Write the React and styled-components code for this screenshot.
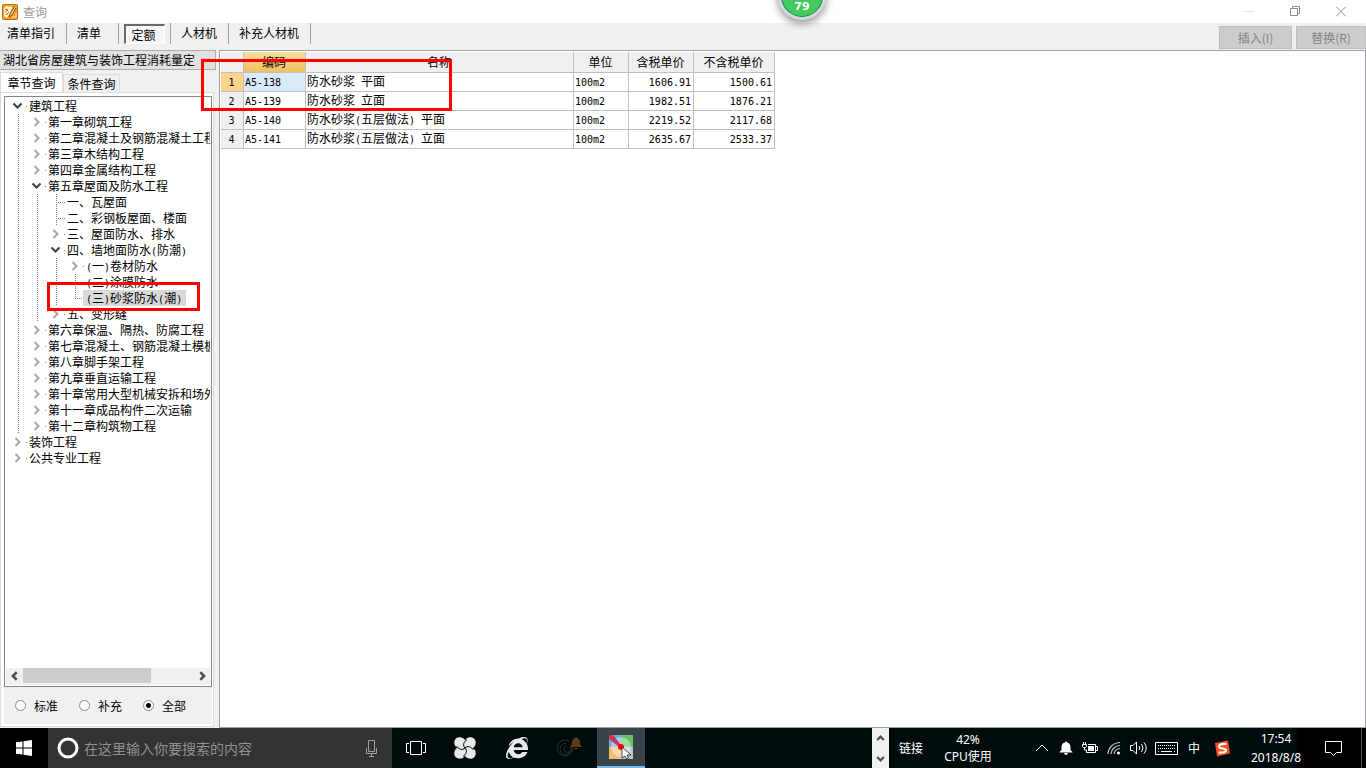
import { Fragment, useState } from 'react';
import styled, { createGlobalStyle, css } from 'styled-components';
import { FaInternetExplorer } from 'react-icons/fa';

const GlobalStyle = createGlobalStyle`
  * {
    box-sizing: border-box;
  }
  body {
    margin: 0;
    overflow: hidden;
    font-family: "Noto Sans CJK SC", sans-serif;
    font-size: 12px;
    line-height: 16px;
    color: #000;
  }
  button, input, select {
    margin: 0;
    padding: 0;
    font: inherit;
    color: inherit;
  }
  button {
    border: 0;
    background: none;
  }
`;

const Desktop = styled.div`
  position: relative;
  display: flex;
  flex-direction: column;
  height: 100vh;
  background-color: #f0f0f0;
`;

/* ---------- title bar ---------- */
const TitleBar = styled.header`
  display: flex;
  align-items: center;
  height: 23px;
  padding: 0 2px;
  background-color: white;
  color: #999;
  .title {
    flex: 1;
    margin-left: 5px;
  }
`;
const WindowButton = styled.button`
  width: 46px;
  height: 20px;
  display: flex;
  align-items: center;
  justify-content: center;
`;

/* ---------- toolbar ---------- */
const Toolbar = styled.nav`
  display: flex;
  align-items: flex-start;
  height: 27px;
`;
const ToolItem = styled.div`
  display: flex;
  height: 21px;
  min-width: 52px;
  padding: ${(props) => (props.$pressed ? '1px 5px 0' : '0 11px 0 10px')};
  border-right: 1px solid #a0a0a0;
  &:first-child {
    padding-left: 7px;
  }
`;
const ToolButton = styled.button`
  height: 19px;
  white-space: nowrap;
  ${(props) =>
    props.$pressed &&
    css`
      width: 41px;
      height: 20px;
      padding-right: 3px;
      border: 1px solid #fff;
      border-top: 2px solid #696969;
      border-left: 2px solid #696969;
      background-color: #f7f7f7;
    `}
`;
const Actions = styled.div`
  display: flex;
  gap: 4px;
  margin-left: auto;
  padding-top: 3px;
`;
const ActionButton = styled.button`
  width: ${(props) => props.$width}px;
  height: 23px;
  border: 1px solid #bfbfbf;
  background-color: #ccc;
  color: #838383;
`;

/* ---------- sidebar ---------- */
const Main = styled.main`
  flex: 1;
  display: flex;
  min-height: 0;
`;
const Sidebar = styled.aside`
  display: flex;
  flex-direction: column;
  width: 219px;
  padding-right: 3px;
`;
const LibrarySelect = styled.div`
  display: grid;
  align-items: center;
  height: 20px;
  margin-bottom: 2px;
  border: 1px solid #adadad;
  border-left: 0;
  background-color: #e1e1e1;
  select {
    grid-area: 1 / 1;
    width: 100%;
    height: 18px;
    padding-left: 3px;
    border: 0;
    background: none;
    appearance: none;
  }
  svg {
    grid-area: 1 / 1;
    justify-self: end;
    margin-right: 5px;
    pointer-events: none;
  }
`;
const Tabs = styled.div`
  display: flex;
  align-items: flex-end;
  height: 20px;
`;
const Tab = styled.button`
  width: ${(props) => (props.$active ? 63 : 57)}px;
  height: ${(props) => (props.$active ? 20 : 18)}px;
  border: 1px solid #dcdcdc;
  border-bottom: 0;
  background-color: ${(props) => (props.$active ? 'white' : '#f0f0f0')};
`;
const TabPanel = styled.div`
  flex: 1;
  display: flex;
  flex-direction: column;
  min-height: 0;
  margin: 0 2px 1px 0;
  padding: 3px 1px 2px 3px;
  border: 1px solid #dcdcdc;
  background-color: white;
`;
const TreeBox = styled.div`
  flex: 1;
  display: flex;
  flex-direction: column;
  justify-content: space-between;
  min-height: 0;
  padding: 1px;
  border: 1px solid #828790;
`;
const TreeList = styled.ul`
  margin: 0;
  padding: 0;
  list-style: none;
  overflow: hidden;
`;
const TreeRow = styled.div`
  display: flex;
  height: 16px;
  padding-left: 3px;
  white-space: nowrap;
`;
const Guide = styled.span`
  flex: none;
  width: 19px;
  height: ${(props) => (props.$half ? 9 : 16)}px;
  background: repeating-linear-gradient(#808080 0 1px, transparent 1px 2px) 9px 0 / 1px 100% no-repeat;
  ${(props) =>
    props.$leaf &&
    css`
      background:
        repeating-linear-gradient(#808080 0 1px, transparent 1px 2px) 9px 0 / 1px 100% no-repeat,
        repeating-linear-gradient(90deg, #808080 0 1px, transparent 1px 2px) 9px 8px / 10px 1px no-repeat;
    `}
`;
const Expander = styled.button`
  flex: none;
  width: 19px;
  height: 16px;
  svg {
    display: block;
  }
`;
const NodeLabel = styled.span`
  margin-left: -2px;
  padding: 0 4px 0 3px;
  background-color: ${(props) => (props.$selected ? '#d9d9d9' : 'transparent')};
`;
const ScrollBar = styled.div`
  flex: none;
  display: flex;
  height: 17px;
  padding-bottom: 1px;
  background-color: #f0f0f0;
  button {
    width: 17px;
    display: flex;
    align-items: center;
    justify-content: center;
  }
  .track {
    flex: 1;
  }
  .thumb {
    width: 75%;
    height: 15px;
    background-color: #cdcdcd;
  }
`;
const Filters = styled.div`
  display: flex;
  height: 37px;
  padding-left: 11px;
  background-color: #f0f0f0;
  label {
    display: flex;
    align-items: center;
    gap: 8px;
    width: 64px;
  }
  input {
    appearance: none;
    width: 11px;
    height: 11px;
    border: 1px solid #8a8a8a;
    border-radius: 50%;
    background-color: white;
  }
  input:checked {
    background-image: radial-gradient(circle, #000 2px, transparent 3px);
  }
`;

/* ---------- table ---------- */
const Content = styled.section`
  flex: 1;
  min-width: 0;
  padding: 1px;
  border: 1px solid #a0a0a8;
  background-color: white;
`;
const QuotaTable = styled.table`
  width: 554px;
  table-layout: fixed;
  border-collapse: separate;
  border-spacing: 0;
  th,
  td {
    height: 19px;
    padding: 0 2px 0 1px;
    border-right: 1px solid #c0c0c0;
    border-bottom: 1px solid #c0c0c0;
    font-weight: normal;
    line-height: 16px;
    text-align: left;
    white-space: nowrap;
  }
  th {
    background-color: #f0f0f0;
    text-align: center;
  }
  thead th {
    height: 21px;
  }
  .active-col {
    background: linear-gradient(#fadb9f, #f0c060);
  }
  .active-row {
    background-color: #ffd58d;
  }
  .active-cell {
    background-color: #d9eaf9;
  }
  .number {
    text-align: right;
  }
`;
const Half = styled.span`
  font-family: "DejaVu Sans Mono", monospace;
  font-size: 10px;
`;

/* ---------- overlays ---------- */
const Mark = styled.div`
  position: absolute;
  top: ${(props) => props.$top}px;
  left: ${(props) => props.$left}px;
  width: ${(props) => props.$width}px;
  height: ${(props) => props.$height}px;
  border: 3px solid #f00;
  pointer-events: none;
`;
const Ball = styled.div`
  position: absolute;
  top: -28px;
  left: calc(50% + 95px);
  width: 48px;
  height: 48px;
  padding-top: 24px;
  border: 3px solid #d4d8d6;
  border-radius: 50%;
  background-color: #42c95f;
  box-shadow: inset 0 0 0 1px #12824d, 0 3px 8px rgba(0, 0, 0, 0.45);
  color: white;
  font: bold 11px/16px "DejaVu Sans", sans-serif;
  text-align: center;
`;

/* ---------- taskbar ---------- */
const Taskbar = styled.footer`
  display: flex;
  height: 40px;
  background: linear-gradient(to left, #000 69px, #000b0e 69px);
  color: white;
`;
const TaskButton = styled.button`
  flex: none;
  display: flex;
  align-items: center;
  justify-content: center;
  width: ${(props) => props.$width || 48}px;
  height: 40px;
  ${(props) =>
    props.$active &&
    css`
      border-bottom: 2px solid #76b9ed;
      background-color: #384449;
    `}
`;
const StartButton = styled(TaskButton)`
  background-color: #000;
`;
const Search = styled.div`
  display: flex;
  align-items: center;
  width: 344px;
  padding: 0 14px 0 9px;
  background-color: #333;
  input {
    flex: 1;
    min-width: 0;
    margin: 0 5px;
    border: 0;
    outline: 0;
    background: none;
    font-size: 14px;
    line-height: 20px;
  }
  input::placeholder {
    color: #919191;
    opacity: 1;
  }
`;
const Apps = styled.div`
  display: flex;
  gap: 4px;
  margin-left: 1px;
`;
const Spinner = styled.div`
  display: flex;
  flex-direction: column;
  width: 17px;
  margin-left: auto;
  background-color: #f0f0f0;
  button {
    flex: 1;
    display: flex;
    align-items: center;
    justify-content: center;
  }
`;
const Info = styled.div`
  display: flex;
  flex-direction: column;
  justify-content: center;
  width: ${(props) => props.$width}px;
  font-family: "Noto Sans", "Noto Sans CJK SC", sans-serif;
  line-height: ${(props) => props.$line || 17}px;
  text-align: center;
  white-space: nowrap;
`;
const Tray = styled.div`
  display: flex;
  margin-left: 27px;
`;
const ShowDesktop = styled.button`
  width: 5px;
  margin-left: 9px;
  border-left: 1px solid #555;
`;

const tree = [
  {
    name: '建筑工程',
    children: [
      { name: '第一章砌筑工程', children: [] },
      { name: '第二章混凝土及钢筋混凝土工程', children: [] },
      { name: '第三章木结构工程', children: [] },
      { name: '第四章金属结构工程', children: [] },
      {
        name: '第五章屋面及防水工程',
        children: [
          { name: '一、瓦屋面' },
          { name: '二、彩钢板屋面、楼面' },
          { name: '三、屋面防水、排水', children: [] },
          {
            name: '四、墙地面防水(防潮)',
            children: [
              { name: '(一)卷材防水', children: [] },
              { name: '(二)涂膜防水' },
              { name: '(三)砂浆防水(潮)' },
            ],
          },
          { name: '五、变形缝', children: [] },
        ],
      },
      { name: '第六章保温、隔热、防腐工程', children: [] },
      { name: '第七章混凝土、钢筋混凝土模板', children: [] },
      { name: '第八章脚手架工程', children: [] },
      { name: '第九章垂直运输工程', children: [] },
      { name: '第十章常用大型机械安拆和场外', children: [] },
      { name: '第十一章成品构件二次运输', children: [] },
      { name: '第十二章构筑物工程', children: [] },
    ],
  },
  { name: '装饰工程', children: [] },
  { name: '公共专业工程', children: [] },
];

const quotas = [
  ['A5-138', '防水砂浆 平面', '100m2', '1606.91', '1500.61'],
  ['A5-139', '防水砂浆 立面', '100m2', '1982.51', '1876.21'],
  ['A5-140', '防水砂浆(五层做法) 平面', '100m2', '2219.52', '2117.68'],
  ['A5-141', '防水砂浆(五层做法) 立面', '100m2', '2635.67', '2533.37'],
];

// half-width characters take half of a full-width one
function Text({ children }) {
  return children
    .split(/([\x20-\x7e]+)/)
    .map((part, i) => (i % 2 ? <Half key={i}>{part}</Half> : <Fragment key={i}>{part}</Fragment>));
}

function Chevron({ d, width = 12, height = 12, color = '#505050', stroke = 2 }) {
  return (
    <svg width={width} height={height} viewBox="0 0 12 12" fill="none" stroke={color} strokeWidth={stroke}>
      <path d={d} />
    </svg>
  );
}

function TreeNode({ node, depth, last, selected, onSelect }) {
  const [open, setOpen] = useState(Boolean(node.children?.length));

  return (
    <li>
      <TreeRow onClick={() => onSelect(node.name)}>
        {Array.from({ length: depth }, (_, i) => (
          <Guide key={i} />
        ))}
        {node.children ? (
          <Expander aria-label={node.name} onClick={() => setOpen(!open)}>
            <svg width="19" height="16" fill="none" strokeWidth="2">
              {open ? (
                <path d="M4.5 5.5 8.5 9.5 12.5 5.5" stroke="#404040" />
              ) : (
                <path d="M6.5 4 10.5 8 6.5 12" stroke="#a6a6a6" />
              )}
              <path d="M17 8h1v1h-1z" fill="#808080" />
            </svg>
          </Expander>
        ) : (
          <Guide $leaf $half={last} />
        )}
        <NodeLabel $selected={selected === node.name}>
          <Text>{node.name}</Text>
        </NodeLabel>
      </TreeRow>
      {open && (
        <TreeList>
          {node.children.map((child, i) => (
            <TreeNode
              key={child.name}
              node={child}
              depth={depth + 1}
              last={i === node.children.length - 1}
              selected={selected}
              onSelect={onSelect}
            />
          ))}
        </TreeList>
      )}
    </li>
  );
}

function TopBar() {
  return (
    <>
      <TitleBar>
        <svg width="16" height="16" viewBox="0 0 16 16">
          <rect x="0.5" y="0.5" width="15" height="15" rx="1" fill="#f2a21b" stroke="#b96a12" />
          <path d="M2 4l3-2 2 1 2-1 1 2-2 5-3 5-3-2z" fill="#fff3cf" />
          <path d="M3 5l3 1M3 8l3-2M4 11l3-3" stroke="#b5651d" />
          <path d="M13 2l-5 8-1 3 3-2 4-7" fill="#fbe08a" stroke="#8a4a10" />
          <path d="M10 13h4V9" stroke="#ffe9a6" fill="none" />
        </svg>
        <span className="title">查询</span>
        <WindowButton aria-label="最小化">
          <svg width="10" height="11" stroke="#e5e5e5"><path d="M0 5.5h10" /></svg>
        </WindowButton>
        <WindowButton aria-label="还原">
          <svg width="10" height="11" fill="none" stroke="#8c8c8c">
            <path d="M.5 2.5h7v7h-7zM2.500 2.500V.5h7v7h-2" />
          </svg>
        </WindowButton>
        <WindowButton aria-label="关闭">
          <svg width="10" height="11" stroke="#8c8c8c"><path d="M0 .5l10 10M10 .5l-10 10" /></svg>
        </WindowButton>
      </TitleBar>
      <Toolbar>
        {['清单指引', '清单', '定额', '人材机', '补充人材机'].map((name) => (
          <ToolItem key={name} $pressed={name === '定额'}>
            <ToolButton $pressed={name === '定额'}>{name}</ToolButton>
          </ToolItem>
        ))}
        <Actions>
          <ActionButton $width={73} disabled>插入(I)</ActionButton>
          <ActionButton $width={70} disabled>替换(R)</ActionButton>
        </Actions>
      </Toolbar>
    </>
  );
}

function SidePanel() {
  const [selected, setSelected] = useState('(三)砂浆防水(潮)');
  const [filter, setFilter] = useState('全部');

  return (
    <Sidebar>
      <LibrarySelect>
        <select aria-label="定额库">
          <option>湖北省房屋建筑与装饰工程消耗量定</option>
        </select>
        <Chevron d="M2 4 6 8 10 4" width={8} height={8} color="#a0a0a0" />
      </LibrarySelect>
      <Tabs>
        <Tab $active>章节查询</Tab>
        <Tab>条件查询</Tab>
      </Tabs>
      <TabPanel>
        <TreeBox>
          <TreeList>
            {tree.map((node) => (
              <TreeNode key={node.name} node={node} depth={0} selected={selected} onSelect={setSelected} />
            ))}
          </TreeList>
          <ScrollBar>
            <button aria-label="向左"><Chevron d="M8 1.500 3.500 6 8 10.500" width={10} height={10} stroke={3} /></button>
            <div className="track"><div className="thumb" /></div>
            <button aria-label="向右"><Chevron d="M4 1.500 8.500 6 4 10.500" width={10} height={10} stroke={3} /></button>
          </ScrollBar>
        </TreeBox>
        <Filters>
          {['标准', '补充', '全部'].map((name) => (
            <label key={name}>
              <input type="radio" name="filter" checked={filter === name} onChange={() => setFilter(name)} />
              {name}
            </label>
          ))}
        </Filters>
      </TabPanel>
    </Sidebar>
  );
}

function QuotaList() {
  return (
    <Content>
      <QuotaTable>
        <colgroup>
          {[23, 62, 268, 55, 65, 81].map((width) => (
            <col key={width} width={width} />
          ))}
        </colgroup>
        <thead>
          <tr>
            <th />
            <th className="active-col">编码</th>
            <th>名称</th>
            <th>单位</th>
            <th>含税单价</th>
            <th>不含税单价</th>
          </tr>
        </thead>
        <tbody>
          {quotas.map((row, i) => (
            <tr key={row[0]}>
              <th className={i === 0 ? 'active-row' : ''}><Text>{String(i + 1)}</Text></th>
              <td className={i === 0 ? 'active-cell' : ''}><Text>{row[0]}</Text></td>
              <td><Text>{row[1]}</Text></td>
              <td><Text>{row[2]}</Text></td>
              <td className="number"><Text>{row[3]}</Text></td>
              <td className="number"><Text>{row[4]}</Text></td>
            </tr>
          ))}
        </tbody>
      </QuotaTable>
    </Content>
  );
}

function BottomBar() {
  return (
    <Taskbar>
      <StartButton aria-label="开始">
        <svg width="16" height="16" viewBox="0 0 16 16" fill="white">
          <path d="M0 2.300 6.500 1.400V7.500H0zM7.500 1.200 16 0V7.500H7.500zM0 8.500H6.500V14.600L0 13.700zM7.500 8.500H16V16L7.500 14.800z" />
        </svg>
      </StartButton>
      <Search>
        <svg width="22" height="22" fill="none" stroke="white" strokeWidth="3"><circle cx="11" cy="11" r="9" /></svg>
        <input type="text" aria-label="搜索" placeholder="在这里输入你要搜索的内容" />
        <svg width="13" height="17" viewBox="0 0 13 17" fill="none" stroke="#a0a0a0">
          <path d="M3.500.5h6v11h-6zM1.500 8v5.500h10V8M6.500 13.500v3M4 16.500h5" />
        </svg>
      </Search>
      <TaskButton aria-label="任务视图">
        <svg width="20" height="14" viewBox="0 0 20 14" fill="none" stroke="white">
          <path d="M4.500.5h11v13h-11zM3 2.500H.5v9H3M17 2.500h2.500v9H17" />
        </svg>
      </TaskButton>
      <Apps>
        <TaskButton aria-label="浏览器">
          <svg width="22" height="22" viewBox="0 0 22 22">
            {[0, 90, 180, 270].map((angle) => (
              <g key={angle} transform={`rotate(${angle} 11 11)`}>
                <path
                  fill="#e8eaea"
                  d="M11 11H5.500C2 11 .3 8.500.3 5.800.3 2.500 2.500.3 5.500.3 9 .3 11.700 2.500 11.700 6z"
                />
              </g>
            ))}
            {[0, 90, 180, 270].map((angle) => (
              <path
                key={angle}
                transform={`rotate(${angle} 11 11)`}
                d="M11 11C8.500 8.500 9.500 5 12.800 2.800"
                fill="none"
                stroke="#000b0e"
                strokeWidth="1"
              />
            ))}
          </svg>
        </TaskButton>
        <TaskButton aria-label="Internet Explorer"><FaInternetExplorer size={22} color="#e8eaea" /></TaskButton>
        <TaskButton aria-label="通知">
          <svg width="28" height="26" viewBox="0 0 28 26" fill="none">
            <g stroke="#2b3235">
              <path d="M18 12a8 8 0 1 1-4-6M16 14a5.500 5.500 0 1 1-5-5.500M11 11c-3 1-3 5 0 6s6-1 5-5" />
            </g>
            <path d="M15 12q2-2 2-5 0-3 3-4 1-2 2 0 3 1 3 4 0 3 2 5zM19 13h4q-2 3-4 0" fill="#5e3d0c" />
          </svg>
        </TaskButton>
        <TaskButton $active aria-label="计价软件">
          <svg width="24" height="24" viewBox="0 0 24 24">
            <path d="M0 0h12v12H0z" fill="#6aaee8" />
            <path d="M12 0h12v12H12z" fill="#65c466" />
            <path d="M0 12h12v12H0z" fill="#f8bd72" />
            <path d="M12 12h12v12H12z" fill="#c4c4c4" />
            <circle cx="12" cy="12" r="10" fill="#fff" opacity="0.400" />
            <path d="M0 0h4l8 10-2 2L0 4z" fill="#c8384e" />
            <circle cx="12" cy="12" r="3" fill="#f00" />
            <path d="M13 12v11l3-2 1.500 3 2-1-1.500-3h4z" fill="white" stroke="#222" strokeWidth="0.800" />
          </svg>
        </TaskButton>
      </Apps>
      <Spinner>
        <button aria-label="向上"><Chevron d="M1.500 8 6 3.500 10.500 8" width={9} height={9} stroke={3} /></button>
        <button aria-label="向下"><Chevron d="M1.500 4 6 8.500 10.500 4" width={9} height={9} stroke={3} /></button>
      </Spinner>
      <Info $width={44}>链接</Info>
      <Info $width={70}>
        <span>42%</span>
        <span>CPU使用</span>
      </Info>
      <Tray>
        <TaskButton $width={24} aria-label="显示隐藏的图标">
          <Chevron d="M0 9 6 3 12 9" color="white" stroke={1} />
        </TaskButton>
        <TaskButton $width={24} aria-label="提醒">
          <svg width="14" height="14" viewBox="0 0 14 14" fill="white">
            <path d="M7 0l1 1.500c3 .5 3.500 3 3.500 5V9l2 2v.5H.5V11l2-2V6.500c0-2 .5-4.500 3.500-5zM5 12h4q-.5 2-2 2t-2-2" />
          </svg>
        </TaskButton>
        <TaskButton $width={24} aria-label="电源">
          <svg width="16" height="12" viewBox="0 0 16 12" fill="none" stroke="white">
            <path d="M6 2.500h7.500v8h-9V8M13.500 4.500h2v4h-2M1.500 0v2M3.500 0v2M.5 2.500h4v2l-1 1h-2l-1-1zM2.500 5.500v2.500h2" />
            <path d="M6 4h6v5H6z" fill="white" stroke="none" />
          </svg>
        </TaskButton>
        <TaskButton $width={24} aria-label="网络">
          <svg width="14" height="14" viewBox="0 0 14 14" fill="none" stroke="#c8cccc" strokeWidth="1.200">
            <path d="M1 13A12 12 0 0 1 13 1.500M4 13a9 9 0 0 1 9-8.500M7 13a6 6 0 0 1 6-5.500" />
            <circle cx="11.500" cy="12" r="1.500" fill="white" stroke="none" />
          </svg>
        </TaskButton>
        <TaskButton $width={24} aria-label="音量">
          <svg width="17" height="14" viewBox="0 0 17 14" fill="none" stroke="white">
            <path d="M.5 4.500h2.500L6.500 1v12L3 9.500H.5zM9 5q1.500 2 0 4M11.500 3q3 4 0 8M14 1.500q4.500 5.500 0 11" />
          </svg>
        </TaskButton>
        <TaskButton $width={32} aria-label="触摸键盘">
          <svg width="23" height="13" viewBox="0 0 23 13" fill="none" stroke="white">
            <path d="M.5.5h22v12H.5z" />
            <path d="M3 3.500h17M3 6.500h17" strokeDasharray="1 1" />
            <path d="M3 9.500h1M6 9.500h11M19 9.500h1" />
          </svg>
        </TaskButton>
        <TaskButton $width={24}>中</TaskButton>
        <TaskButton $width={32} aria-label="搜狗输入法">
          <svg width="17" height="17" viewBox="0 0 17 17" fill="none">
            <path d="M1 3 14 .5 16 13.500 3 16.500z" fill="#f4501e" />
            <path d="M12.500 4Q5 3.500 5 6.500q0 1.500 3.500 2t3.500 2q0 2.500-7.500 2" stroke="white" strokeWidth="2.200" />
          </svg>
        </TaskButton>
      </Tray>
      <Info $width={76} $line={19}>
        <span>17:54</span>
        <span>2018/8/8</span>
      </Info>
      <TaskButton $width={38} aria-label="操作中心">
        <svg width="17" height="17" viewBox="0 0 17 17" fill="none" stroke="white">
          <path d="M.5 1.500h16v11h-5l-3 3-3-3h-5z" />
        </svg>
      </TaskButton>
      <ShowDesktop aria-label="显示桌面" />
    </Taskbar>
  );
}

function App() {
  return (
    <Desktop>
      <GlobalStyle />
      <TopBar />
      <Main>
        <SidePanel />
        <QuotaList />
      </Main>
      <BottomBar />
      <Mark $top={59} $left={201} $width={251} $height={52} />
      <Mark $top={282} $left={47} $width={153} $height={29} />
      <Ball>79</Ball>
    </Desktop>
  );
}

export default App;
